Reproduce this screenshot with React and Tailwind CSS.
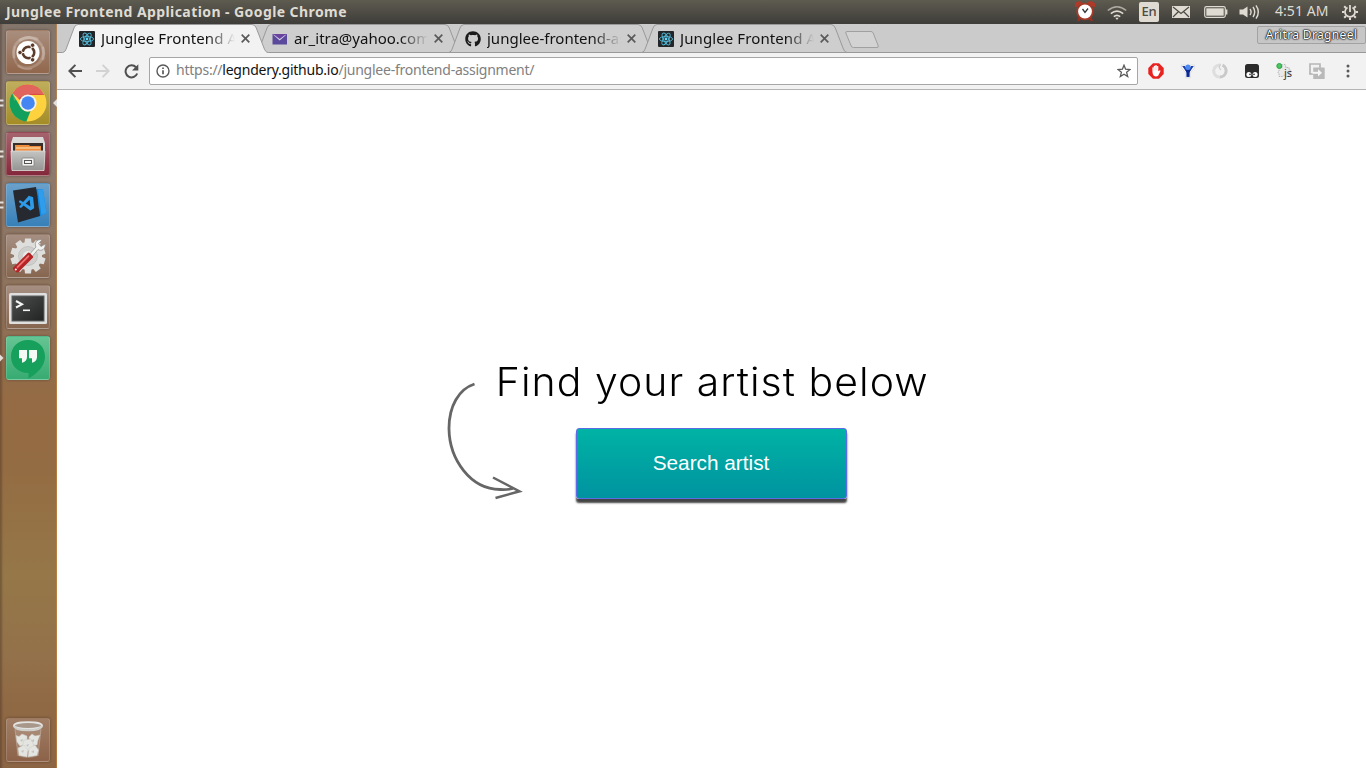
import React from "react";
import { VscVscode } from "react-icons/vsc";
import { FaGithub } from "react-icons/fa";

const UI = "font-['Noto_Sans','Open_Sans',sans-serif]";

function ReactMark() {
  return (
    <svg width="16" height="16" viewBox="0 0 16 16" className="block shrink-0">
      <rect width="16" height="16" rx="1" fill="#222629" />
      <g fill="none" stroke="#53b8d6" strokeWidth="0.9">
        <ellipse cx="8" cy="8" rx="6.6" ry="2.6" />
        <ellipse cx="8" cy="8" rx="6.6" ry="2.6" transform="rotate(60 8 8)" />
        <ellipse cx="8" cy="8" rx="6.6" ry="2.6" transform="rotate(120 8 8)" />
      </g>
      <circle cx="8" cy="8" r="1.4" fill="#61dafb" />
    </svg>
  );
}

function MailMark() {
  return (
    <svg width="16" height="16" viewBox="0 0 16 16" className="block shrink-0">
      <rect x="0.5" y="3" width="14.5" height="10.5" fill="#5b4a9c" />
      <path d="M1 3.5 L7.7 9.6 L14.5 3.5 Z" fill="#d9d3ec" />
      <path d="M1 3 H14.5 L7.7 8 Z" fill="#6a43a0" />
    </svg>
  );
}

function Tab({ active, icon, label, textClass }) {
  return (
    <div className="relative flex h-[29px] w-[193px] shrink-0 items-center pl-[17px]">
      <svg className={active ? "absolute left-0 top-0 z-[2]" : "absolute left-0 top-0 z-0"} width="208" height="29" viewBox="0 0 208 29">
        <path
          d="M0.5 28.5 C3 28 3.5 26.5 4.5 24 L12 4 Q13.2 0.5 16 0.5 H190 Q193 0.5 194.3 4 L202 24 C203 26.5 204 28.5 206.5 28.5 V29 H0 Z"
          fill={active ? "#f2f2f2" : "#cecece"}
        />
        <path
          d="M0.5 28.5 C3 28 3.5 26.5 4.5 24 L12 4 Q13.2 0.5 16 0.5 H190 Q193 0.5 194.3 4 L202 24 C203 26.5 204 28.5 206.5 28.5"
          fill="none"
          stroke="#999"
          strokeWidth="1"
        />
        {!active && <path d="M0 28.5 H207" stroke="#999" />}
      </svg>
      <div className="relative z-[3] flex items-center">
        {icon}
        <div className="mb-[2px] ml-[6px] w-[134px] overflow-hidden [mask-image:linear-gradient(to_right,#000_106px,transparent_134px)]">
          <span className={"block whitespace-nowrap text-[15px] leading-[20px] text-[#111] " + textClass}>{label}</span>
        </div>
        <svg width="9" height="9" viewBox="0 0 9 9" className="ml-[6px] block shrink-0">
          <path d="M0.7 0.7 L8.3 8.3 M8.3 0.7 L0.7 8.3" stroke="#5a5a5a" strokeWidth="1.7" />
        </svg>
      </div>
    </div>
  );
}

function Tile({ tone, left, right, children }) {
  return (
    <div className="flex h-[44px] w-[57px] shrink-0 items-center">
      <div className="flex w-[6px] shrink-0 items-center">
        {left === "double" && (
          <svg width="4" height="9" viewBox="0 0 4 9">
            <path d="M0 1.5 H3.5 M0 6.5 H3.5" stroke="#e4e0dc" strokeWidth="1.9" />
          </svg>
        )}
        {left === "arrow" && (
          <svg width="4" height="8" viewBox="0 0 4 8">
            <path d="M0 0.5 L3.5 4 L0 7.5 Z" fill="#e4e0dc" />
          </svg>
        )}
      </div>
      <div className={"flex h-[44px] w-[44px] shrink-0 items-center justify-center rounded-[3px] border border-white/15 bg-linear-to-b shadow-[0_0_3px_rgba(0,0,0,0.35)] " + tone}>
        {children}
      </div>
      {right && (
        <svg width="4" height="8" viewBox="0 0 4 8" className="ml-[3px]">
          <path d="M4 0 L0 4 L4 8 Z" fill="#e4e0dc" />
        </svg>
      )}
    </div>
  );
}

function UbuntuIcon() {
  return (
    <svg width="42" height="42" viewBox="0 0 42 42" className="shrink-0">
      <g fill="none" stroke="#fff" strokeLinecap="round">
        <path d="M7 26 C4 12 16 3 30 8" opacity=".22" strokeWidth="3" />
        <path d="M13 9 C27 1 40 14 36 28" opacity=".22" strokeWidth="3" />
        <path d="M36 17 C39 32 24 41 12 35" opacity=".2" strokeWidth="3" />
        <path d="M24 38 C10 40 4 28 8 16" opacity=".15" strokeWidth="2" />
      </g>
      <circle cx="21" cy="21.5" r="11.5" fill="#fff" />
      <circle cx="21.5" cy="21.5" r="5.7" fill="none" stroke="#5b3b29" strokeWidth="2.7" />
      <path d="M21.5 21.5 L12.5 21.5 M21.5 21.5 L26 13.7 M21.5 21.5 L26 29.3" stroke="#fff" strokeWidth="1.2" />
      <circle cx="21.5" cy="21.5" r="4" fill="#fff" />
      <g fill="#5b3b29" stroke="#fff" strokeWidth="0.8">
        <circle cx="13" cy="21.5" r="2.2" />
        <circle cx="25.6" cy="14.2" r="2.2" />
        <circle cx="25.6" cy="28.8" r="2.2" />
      </g>
    </svg>
  );
}

function ChromeIcon() {
  return (
    <svg width="40" height="40" viewBox="0 0 40 40" className="shrink-0">
      <circle cx="20" cy="20" r="18.5" fill="#fdd23e" />
      <path d="M20 1.5 A18.5 18.5 0 0 1 36.5 12 H20 A8.5 8.5 0 0 0 12 17 L4.3 10.2 A18.5 18.5 0 0 1 20 1.5 Z" fill="#dc4a40" />
      <path d="M4.3 10.2 L12.6 24.3 A8.5 8.5 0 0 0 22.5 28.1 L18.4 38.4 A18.5 18.5 0 0 1 4.3 10.2 Z" fill="#12a05c" />
      <path d="M4.3 10.2 A18.5 18.5 0 0 1 36.5 12 Q20 8 6 18 Z" fill="#fff" opacity=".15" />
      <circle cx="20" cy="20" r="8.6" fill="#f3f3f3" />
      <circle cx="20" cy="20" r="6.8" fill="#4487f2" />
    </svg>
  );
}

function FilesIcon() {
  return (
    <svg width="42" height="42" viewBox="0 0 42 42" className="shrink-0">
      <defs>
        <linearGradient id="cab" x1="0" y1="0" x2="0" y2="1">
          <stop offset="0" stopColor="#c4c4c2" />
          <stop offset="1" stopColor="#949492" />
        </linearGradient>
      </defs>
      <path d="M6 4 H36 L38 10 V20 H4 V10 Z" fill="#d9d9d7" />
      <rect x="6" y="10" width="30" height="9" fill="#3a2e2a" />
      <path d="M8 12 H22 L23 13 H34 V19 H8 Z" fill="#ef8e3c" />
      <path d="M9 15 H33" stroke="#f8d09b" strokeWidth="1.4" />
      <path d="M4 18 H38 L37 37.5 H5 Z" fill="url(#cab)" stroke="#dededc" strokeWidth="0.8" />
      <rect x="15" y="25" width="12" height="8" rx="1" fill="#f1f1ef" stroke="#777" strokeWidth="0.7" />
      <rect x="17.5" y="27.5" width="7" height="3" fill="#f4f4f2" stroke="#555" strokeWidth="1" />
    </svg>
  );
}

function CodeIcon() {
  return (
    <div className="relative flex h-[42px] w-[42px] items-center justify-center">
      <svg width="42" height="42" viewBox="0 0 42 42" className="block">
        <path d="M26 5 L36 5.5 L39.5 29 L31 33 L13 36 L28 28 Z" fill="#1187df" />
        <path d="M31 6 L36 5.5 L39.5 29 L34.5 31 Z" fill="#2f9cec" />
        <path d="M6 6.5 L29 3 L30.5 12 L31.5 22 L32.5 27.5 L33 32 L11 38.5 Z" fill="#262a30" />
      </svg>
      <VscVscode className="absolute left-[11px] top-[11px] h-[18px] w-[18px] -rotate-6 text-[#2d9be8]" />
    </div>
  );
}

function SettingsIcon() {
  const teeth = [0, 36, 72, 108, 144, 180, 216, 252, 288, 324];
  return (
    <svg width="42" height="42" viewBox="0 0 42 42" className="shrink-0">
      <g fill="#dededc">
        {teeth.map((a) => (
          <path key={a} d="M17.4 9 L18 3.5 H24 L24.6 9 Z" transform={"rotate(" + a + " 21 21)"} />
        ))}
        <circle cx="21" cy="21" r="14" />
      </g>
      <circle cx="21" cy="21" r="9.5" fill="#cfcfcd" stroke="#b4b4b2" strokeWidth="0.6" />
      <circle cx="21" cy="21" r="5" fill="#e9e9e7" />
      <path d="M20 22 L29 12 C26.5 7 31 3.5 35 5 L31.5 8.5 L34 11.5 L38.2 9 C39 13.5 34.5 17 31 14.5 L23 24 Z" fill="#f1f1ef" stroke="#8b8b89" strokeWidth="0.7" />
      <path d="M7.5 33.5 L21.8 19 L24.6 22 L10.5 36 Z" stroke="#b32426" strokeWidth="3" strokeLinejoin="round" fill="#d6393a" />
      <path d="M10 32.5 L22 20.5" stroke="#ee7c78" strokeWidth="1.6" />
      <circle cx="8.8" cy="34.6" r="1" fill="#fff" />
    </svg>
  );
}

function TerminalIcon() {
  return (
    <svg width="42" height="42" viewBox="0 0 42 42" className="shrink-0">
      <defs>
        <linearGradient id="scr" x1="0" y1="0" x2="1" y2="1">
          <stop offset="0" stopColor="#4d4f4f" />
          <stop offset="1" stopColor="#222424" />
        </linearGradient>
      </defs>
      <rect x="2" y="7" width="38" height="31" rx="1.5" fill="#dfdfdf" />
      <rect x="4.5" y="9.5" width="33" height="26" fill="#5e6060" />
      <rect x="5.5" y="10.5" width="31" height="24" fill="url(#scr)" />
      <path d="M9 15 L15 18.3 L9 21.5" fill="none" stroke="#f4f4f4" strokeWidth="2" />
      <path d="M16 24.3 H23" stroke="#f4f4f4" strokeWidth="1.6" />
    </svg>
  );
}

function HangoutsIcon() {
  return (
    <svg width="42" height="42" viewBox="0 0 42 42" className="shrink-0">
      <path d="M21 3 C31 3 38 10 38 19.5 C38 29 30.5 36.5 21.5 41.5 V36 C11 36 4 29 4 19.5 C4 10 11 3 21 3 Z" fill="#16a05c" />
      <path d="M12 13 H20 V20 C20 23 18.2 25 15 25.8 V21.3 H12 Z M22 13 H30 V20 C30 23 28.2 25 25 25.8 V21.3 H22 Z" fill="#f3faf6" />
    </svg>
  );
}

function TrashIcon() {
  return (
    <svg width="42" height="42" viewBox="0 0 42 42" className="shrink-0">
      <path d="M8 9 H34 L31 37 Q21 41 11 37 Z" fill="#c9b5a8" opacity=".3" />
      <g fill="#e4e4e0" stroke="#c9c9c4" strokeWidth="0.5">
        <path d="M9 16.5 L12 17.5 L15 15 L20 17 L20 25 L13 27 L10 23 Z" />
        <path d="M22 18 L25 15 L28 17 L33 16 L31 21 L30 26 L23 26 Z" />
        <path d="M17 21 L24 20 L27 27 L21 32 L15 28 Z" />
        <path d="M11 29 L17 26 L21 31 L20 38 L12 36.5 Z" />
        <path d="M22 29 L28 26 L31.5 31 L30 36.5 L21 38 Z" />
      </g>
      <g fill="#c4c4bf">
        <path d="M13 21 L16 20 L15 23 Z M24 22 L27 20 L27 23 Z M19 26 L22 25 L21 28 Z M14 32 L17 31 L16 34 Z M24 33 L27 31 L27 34 Z" />
      </g>
      <path d="M8 10 L11 37 M34 10 L31 37" stroke="#d9d2cd" strokeWidth="0.8" opacity=".5" />
      <ellipse cx="21" cy="6.5" rx="14" ry="3.4" fill="#a8978b" stroke="#e3e3e1" strokeWidth="1.8" />
      <path d="M7 7 C8 12.5 34 12.5 35 7" stroke="#cfcfcc" strokeWidth="2" fill="none" />
    </svg>
  );
}

function Launcher() {
  const neutral = "from-[#a58f82] to-[#87664f]";
  return (
    <aside className="flex w-[57px] shrink-0 flex-col gap-[7px] bg-[linear-gradient(to_bottom,#85766c_0%,#8e7a6e_20%,#8f7158_40%,#946b44_50%,#946c43_60%,#957748_74%,#93714a_85%,#8f6844_92%,#8c6545_100%)] pb-[6px] pt-[6px] shadow-[inset_3px_0_2px_-1px_rgba(60,40,30,0.35),inset_-1px_0_0_rgba(214,140,60,0.5)]">
      <Tile tone="from-[#a98e7e] to-[#91674c]"><UbuntuIcon /></Tile>
      <Tile tone="from-[#bfae5d] to-[#a48c25]" left="double" right><ChromeIcon /></Tile>
      <Tile tone="from-[#a5636d] to-[#84283c]" left="double"><FilesIcon /></Tile>
      <Tile tone="from-[#6aa1cb] to-[#3680b8]" left="double"><CodeIcon /></Tile>
      <Tile tone={neutral}><SettingsIcon /></Tile>
      <Tile tone={neutral}><TerminalIcon /></Tile>
      <Tile tone="from-[#65c493] to-[#37ab72]" left="arrow"><HangoutsIcon /></Tile>
      <div className="grow" />
      <Tile tone="from-[#a07d65] to-[#8c6349]"><TrashIcon /></Tile>
    </aside>
  );
}

function SystemTray() {
  return (
    <div className="flex h-full items-center text-[#dfdbd2]">
      <svg width="22" height="22" viewBox="0 0 22 22" className="-mt-[2px]">
        <path d="M6 17.5 L4 20.8 M16 17.5 L18 20.8" stroke="#9a2f20" strokeWidth="2.6" />
        <path d="M0.8 7.5 Q0 1 5.5 1.2 Q8.5 1.3 9 3.5 Z M21.2 7.5 Q22 1 16.5 1.2 Q13.5 1.3 13 3.5 Z" fill="#b03a28" />
        <circle cx="11" cy="11.5" r="7.8" fill="#fff" stroke="#a63a28" strokeWidth="1.8" />
        <path d="M8.5 9 L11 12.5 L14 8.5" fill="none" stroke="#333" strokeWidth="1.3" />
      </svg>
      <svg width="20" height="16" viewBox="0 0 20 16" className="ml-[11px] mt-px" fill="none" stroke="currentColor" strokeWidth="1.6">
        <path d="M0.8 5.5 Q10 -2 19.2 5.5" opacity=".65" />
        <path d="M3.8 8.6 Q10 3.5 16.2 8.6" />
        <path d="M6.8 11.6 Q10 9 13.2 11.6" />
        <path d="M8.3 12.7 H11.7 L10 15 Z" fill="currentColor" stroke="none" />
      </svg>
      <span className="ml-[12px] flex h-[20px] w-[20px] items-center justify-center rounded-[2px] bg-[#dfdbd2] text-[13px] font-medium tracking-[-0.3px] text-[#4b4a44]">En</span>
      <svg width="18" height="12" viewBox="0 0 18 12" className="ml-[13px]">
        <rect width="18" height="12" fill="#dfdbd2" />
        <path d="M1 1 L9 7.5 L17 1 M1 11 L6.3 5.8 M17 11 L11.7 5.8" stroke="#4b4a44" strokeWidth="1.2" fill="none" />
      </svg>
      <svg width="24" height="12" viewBox="0 0 24 12" className="ml-[14px]">
        <rect x="0.7" y="0.7" width="20.6" height="10.6" rx="1.8" fill="none" stroke="#dfdbd2" strokeWidth="1.2" />
        <rect x="2.3" y="2.3" width="17.4" height="7.4" fill="#dfdbd2" />
        <path d="M22.7 3.5 V8.5" stroke="#dfdbd2" strokeWidth="1.4" />
      </svg>
      <svg width="21" height="16" viewBox="0 0 21 16" className="ml-[11px]" fill="none" stroke="currentColor" strokeWidth="1.4">
        <path d="M0.5 5.5 H4 L8.5 2.5 V13.5 L4 10.5 H0.5 Z" fill="currentColor" stroke="none" />
        <path d="M11 5 Q13.2 8 11 11" />
        <path d="M14 3 Q17.4 8 14 13" />
        <path d="M17 1.3 Q21.6 8 17 14.7" />
      </svg>
      <span className="mb-[2px] ml-[15px] w-[55px] whitespace-nowrap text-[14px] leading-[20px] tracking-[0.05px]">4:51 AM</span>
      <svg width="16" height="16" viewBox="0 0 16 16" className="ml-[12px]" fill="none" stroke="currentColor">
        <path d="M5.5 3.6 A5 5 0 1 0 10.5 3.6" strokeWidth="1.7" />
        <path d="M8 1 V8" strokeWidth="1.8" />
        <path d="M0 8 H2.5 M13.5 8 H16 M2.2 2.2 L4 4 M13.8 2.2 L12 4 M2.2 13.8 L4 12 M13.8 13.8 L12 12 M8 13.5 V16" strokeWidth="2" />
      </svg>
    </div>
  );
}

function Toolbar() {
  return (
    <div className="flex h-[37px] items-center border-b border-[#b3b3b3] bg-[#f2f2f2] pl-[11px]">
      <svg width="14" height="14" viewBox="0 0 14 14" fill="none" stroke="#505050" strokeWidth="2">
        <path d="M14 7 H1.5 M7.4 0.9 L1.4 7 L7.4 13.1" />
      </svg>
      <svg width="14" height="14" viewBox="0 0 14 14" className="ml-[14px]" fill="none" stroke="#d2d2d2" strokeWidth="2">
        <path d="M0 7 H12.5 M6.6 0.9 L12.6 7 L6.6 13.1" />
      </svg>
      <svg width="15" height="15" viewBox="0 0 15 15" className="ml-[14px]" fill="none" stroke="#505050" strokeWidth="2">
        <path d="M12 3.3 A6 6 0 1 0 13.2 9.5" />
        <path d="M14.3 0.3 V6.6 H8 Z" fill="#505050" stroke="none" />
      </svg>
      <div className="ml-[10px] flex h-[28px] w-[989px] shrink-0 items-center rounded-[2px] border border-[#a6a6a6] bg-white pl-[6px] pr-[6px]">
        <svg width="14" height="14" viewBox="0 0 14 14" fill="none" stroke="#5a5a5a">
          <circle cx="7" cy="7" r="6" strokeWidth="1.4" />
          <path d="M7 6.3 V10.3 M7 3.6 V5.1" strokeWidth="1.7" />
        </svg>
        <span className="mb-[2px] ml-[6px] whitespace-nowrap text-[14px] leading-[20px] tracking-[-0.24px] text-[#808080]">
          https://<span className="text-[#111]">legndery.github.io</span>/junglee-frontend-assignment/
        </span>
        <svg width="14" height="14" viewBox="0 0 14 14" className="ml-auto" fill="none" stroke="#5a5a5a" strokeWidth="1.3">
          <path d="M7 1.2 L8.6 5.2 L13 5.5 L9.6 8.3 L10.7 12.6 L7 10.3 L3.3 12.6 L4.4 8.3 L1 5.5 L5.4 5.2 Z" />
        </svg>
      </div>
      <div className="flex grow items-center pl-[10px]">
        <svg width="16" height="16" viewBox="0 0 16 16" className="shrink-0">
          <path d="M5 0.3 H11 L15.7 5 V11 L11 15.7 H5 L0.3 11 V5 Z" fill="#e8221f" />
          <path d="M4.4 8.6 V4.6 Q5 3.9 5.8 4.6 V3 Q6.5 2.3 7.2 3 V2.4 Q8 1.7 8.8 2.4 V3.2 Q9.6 2.6 10.3 3.3 V8.3 L11.8 7.2 Q12.8 7.3 12.3 8.4 L10.2 12.8 Q8 14.2 5.8 12.8 Q4.4 11 4.4 8.6 Z" fill="#fff" />
          <path d="M5.8 4.6 V7.5 M7.3 3.5 V7.3 M8.8 3.5 V7.3" stroke="#f2a09e" strokeWidth="0.4" />
        </svg>
        <svg width="16" height="16" viewBox="0 0 16 16" className="ml-[16px] shrink-0">
          <path d="M1.2 2.2 L5 2 Q8 5 11 2 L14.8 2.2 L14 5.5 L10.2 10 V14.8 H5.8 V10 L2 5.5 Z" fill="#fff" stroke="#d4d4d4" strokeWidth="0.7" strokeLinejoin="round" />
          <path d="M2.2 3 H4.8 L8 6.5 L11.2 3 H13.8 L9.5 9.3 V14 H6.5 V9.3 Z" fill="#1a3fae" />
          <circle cx="8" cy="4.2" r="2.6" fill="#4f8af0" />
          <path d="M5.5 7 H10.5 L9.3 10 V13.5 H6.8 V10 Z" fill="#0d2690" />
        </svg>
        <svg width="16" height="16" viewBox="0 0 16 16" className="ml-[16px] shrink-0" fill="none">
          <path d="M8.5 2 A6 6 0 0 0 7 14" stroke="#dedede" strokeWidth="3" />
          <path d="M10.5 2.2 A6.2 6.2 0 0 1 7.5 14" stroke="#c9c9c9" strokeWidth="3" />
          <path d="M9 1.5 Q5.5 3.5 9 7" stroke="#cfcfcf" strokeWidth="1.3" />
        </svg>
        <svg width="16" height="16" viewBox="0 0 16 16" className="ml-[16px] shrink-0">
          <rect x="1" y="1" width="14" height="14" rx="2.5" fill="#2b2b2b" />
          <circle cx="4.9" cy="11.4" r="2.5" fill="#fff" />
          <circle cx="11.1" cy="11.4" r="2.5" fill="#fff" />
          <circle cx="6" cy="11.4" r="0.8" fill="#2b2b2b" />
          <circle cx="10" cy="11.4" r="0.8" fill="#2b2b2b" />
        </svg>
        <div className="relative ml-[16px] h-[18px] w-[18px] shrink-0">
          <svg width="16" height="18" viewBox="0 0 16 18" className="block">
            <path d="M3 5.5 H6 Q5 2 8 2.5 Q10.5 2.5 9.5 5.5 H13 V8 Q15 7 15 10 H13 V14.5 H9.5 Q9 12 7 14.5 H3 V11 Q0.5 10.5 3 9 Z" fill="#e9e9e9" stroke="#b0b0b0" strokeWidth="0.9" strokeDasharray="1.6 0.9" />
            <circle cx="3.3" cy="4" r="2.5" fill="#4cc763" stroke="#2aa544" strokeWidth="1" />
          </svg>
          <span className="absolute left-[8px] top-[4px] text-[11px] leading-[13px] text-[#333]">js</span>
        </div>
        <svg width="16" height="16" viewBox="0 0 16 16" className="ml-[15px] shrink-0" fill="none">
          <path d="M1 11 V1 H11 V5" stroke="#b7b7b7" strokeWidth="1.7" />
          <path d="M0.2 11 H4.5" stroke="#b7b7b7" strokeWidth="1.7" />
          <rect x="4.2" y="4.5" width="11.5" height="11.5" rx="0.6" fill="#b9b9b9" />
          <path d="M3.5 9.8 H9.5" stroke="#f6f6f6" strokeWidth="2" />
          <path d="M9 6.2 L13 9.8 L9 13.4 Z" fill="#f6f6f6" />
        </svg>
        <svg width="4" height="14" viewBox="0 0 4 14" className="ml-[21px] shrink-0" fill="#5a5a5a">
          <circle cx="2" cy="2" r="1.5" /><circle cx="2" cy="7" r="1.5" /><circle cx="2" cy="12" r="1.5" />
        </svg>
      </div>
    </div>
  );
}

export default function App() {
  return (
    <div className={"flex h-[768px] w-[1366px] flex-col overflow-hidden bg-white " + UI}>
      <header className="flex h-[24px] shrink-0 items-center justify-between bg-linear-to-b from-[#5e5b50] to-[#3e3d39] pl-[6px] pr-[8px]">
        <h1 className="whitespace-nowrap text-[14px] font-bold leading-[24px] tracking-[0.42px] text-[#dfdbd2]">
          Junglee Frontend Application - Google Chrome
        </h1>
        <SystemTray />
      </header>
      <div className="flex min-h-0 grow">
        <Launcher />
        <div className="flex min-w-0 grow flex-col">
          <div className="flex h-[29px] shrink-0 items-start bg-[#cbcbcb] pl-[5px] shadow-[inset_0_-1px_0_#999]">
            <Tab active icon={<ReactMark />} label="Junglee Frontend Application" textClass="tracking-[0.1px]" />
            <Tab icon={<MailMark />} label="ar_itra@yahoo.com" textClass="tracking-[0px]" />
            <Tab icon={<FaGithub className="h-[16px] w-[16px] shrink-0 text-[#1b1b1b]" />} label="junglee-frontend-assignment" textClass="tracking-[0px]" />
            <Tab icon={<ReactMark />} label="Junglee Frontend Application" textClass="tracking-[0.1px]" />
            <svg width="36" height="18" viewBox="0 0 36 18" className="ml-[10px] mt-[7px] shrink-0">
              <path d="M3 0.5 H27 Q28.5 0.5 29.2 2 L34.3 15 Q34.6 16.5 33 16.5 H9.5 Q7.8 16.5 7.2 15 L1.8 2 Q1.3 0.5 3 0.5 Z" fill="#d3d3d3" stroke="#a0a0a0" />
            </svg>
            <div className="ml-auto mt-[2px] flex h-[18px] w-[109px] items-center justify-center whitespace-nowrap rounded-[2px] border border-[#a2a2a2] bg-[#c6c6c6] text-[12px] tracking-[0.35px] text-white [text-shadow:0_0_1px_#000,0_0_1px_#000,0_0_2px_#222,0_0_2px_#222]">
              Aritra Dragneel
            </div>
          </div>
          <Toolbar />
          <main className="flex grow items-start pl-[389px] pt-[268px]">
            <svg width="80" height="150" viewBox="0 0 80 150" className="shrink-0" fill="none" stroke="#666">
              <path d="M28.5 26 C13 31 2.8 48 3 71 C3.5 101 24 131 54 131.5 Q61 132 67 130.5" strokeWidth="2.8" />
              <path d="M47 119.5 L73.5 133.3 L49.5 140" strokeWidth="2.5" />
            </svg>
            <div className="-ml-[33px] flex w-[436px] flex-col items-center">
              <h2 className="h-[70px] origin-center scale-x-105 whitespace-nowrap pl-[2px] font-['Inter','Lato',sans-serif] text-[39px] font-[330] leading-[47px] tracking-[1px] text-black">
                Find your artist below
              </h2>
              <button className="h-[71px] w-[271px] rounded-[3px] border border-[#5c6ce8] bg-linear-to-b from-[#00b3a4] to-[#0093a0] pb-[1px] font-['Liberation_Sans',sans-serif] text-[20.8px] text-white shadow-[0_4px_2px_#444]">
                Search artist
              </button>
            </div>
          </main>
        </div>
      </div>
    </div>
  );
}
